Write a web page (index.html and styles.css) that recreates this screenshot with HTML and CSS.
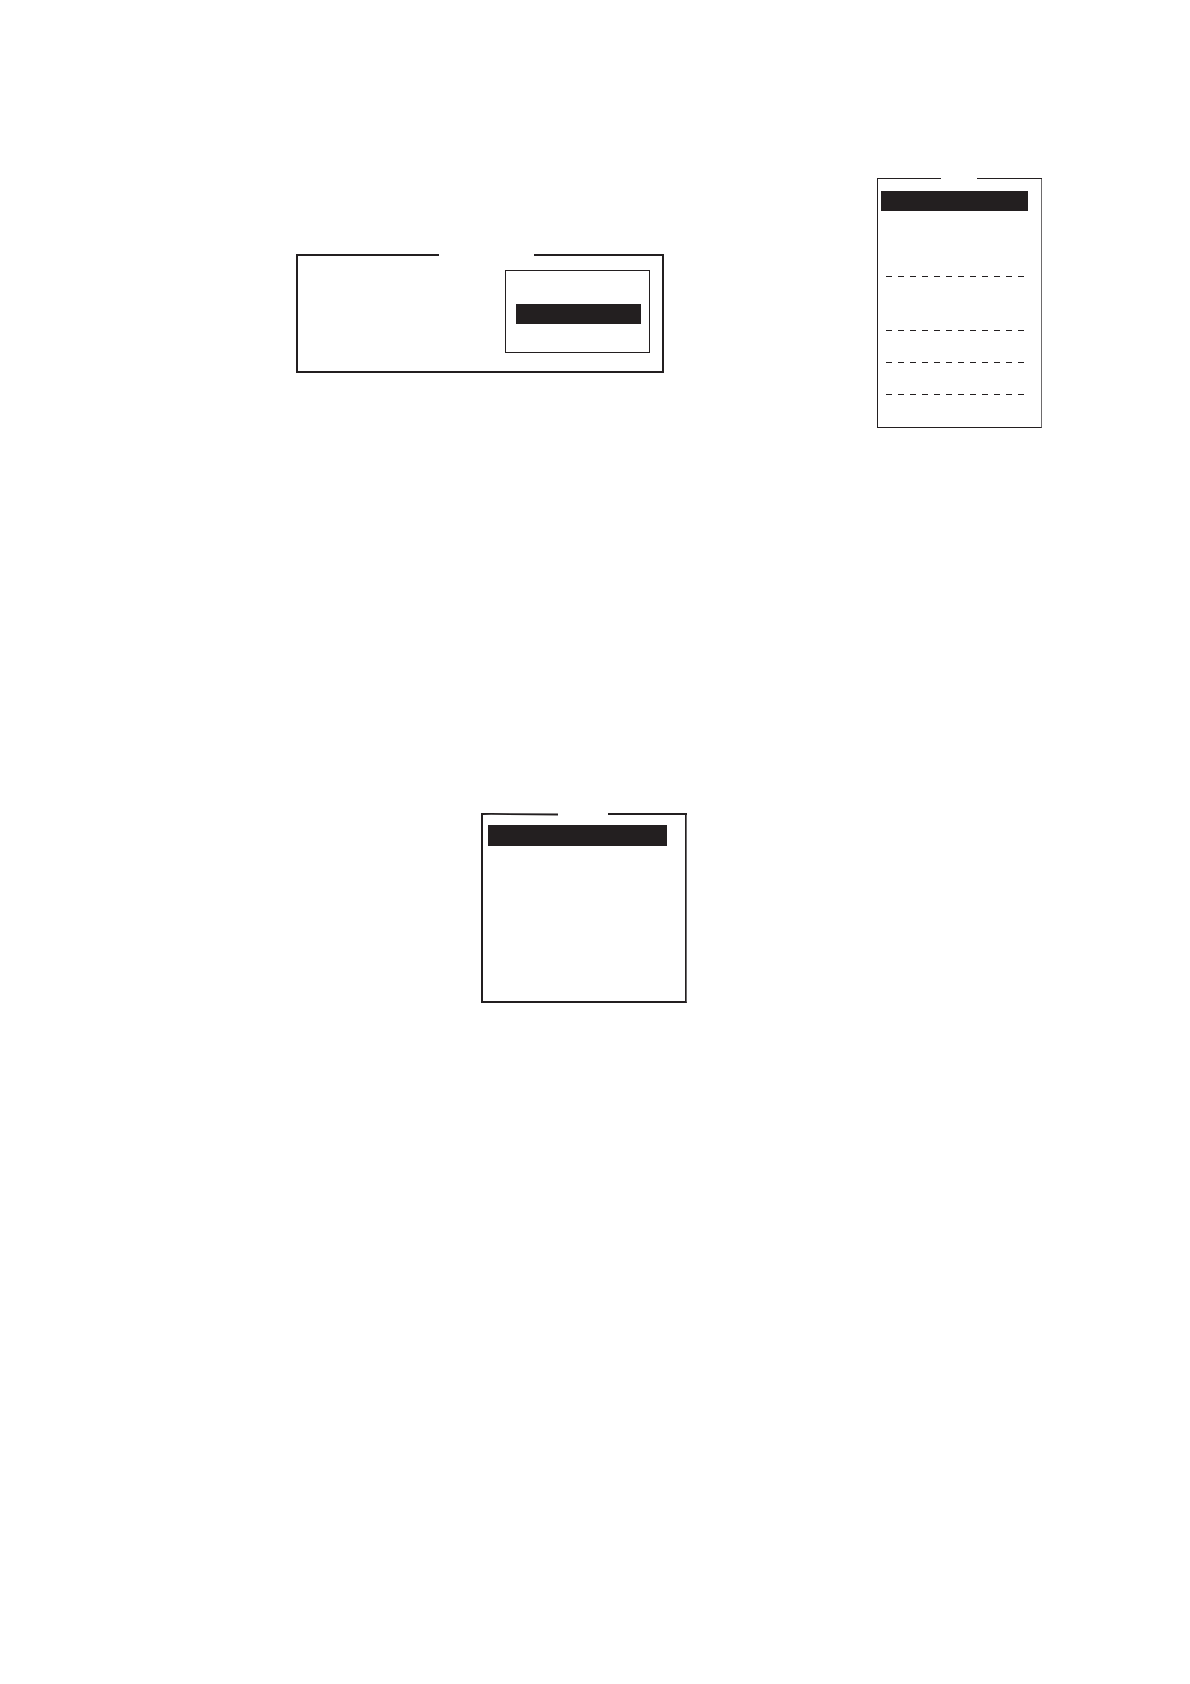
FILE: index.html
```html
<!DOCTYPE html>
<html lang="en">
<head>
<meta charset="utf-8">
<title>Menus</title>
<link rel="stylesheet" href="styles.css">
</head>
<body>
<main class="page">
  <div class="row row-top">
    <section class="panel panel-wide">
      <div class="edge"><span class="rule"></span><span class="rule"></span></div>
      <div class="body">
        <div class="popup"><div class="bar"></div></div>
      </div>
    </section>
    <section class="panel panel-list">
      <div class="edge"><span class="rule"></span><span class="rule"></span></div>
      <div class="body">
        <div class="bar"></div>
        <div class="dashes first"></div>
        <div class="dashes second"></div>
        <div class="dashes"></div>
        <div class="dashes"></div>
      </div>
    </section>
  </div>
  <div class="row row-bottom">
    <section class="panel panel-menu">
      <div class="edge">
        <svg class="slant" viewBox="0 0 77 3" preserveAspectRatio="none" aria-hidden="true"><path d="M0 0H10L77 .6V2.4L10 1.7L2 2H0Z"/></svg>
        <span class="rule"></span>
      </div>
      <div class="body"><div class="bar"></div></div>
    </section>
  </div>
</main>
</body>
</html>
```
FILE: styles.css
```css
:root {
  --ink: #231f20;
  --soft: #6d6b6c;
}

* {
  box-sizing: border-box;
}

body {
  margin: 0;
  background: #fff;
}

.page {
  min-height: 100vh;
  padding-top: 178px;
}

.row {
  display: grid;
  align-items: start;
}

.row-top {
  grid-template-columns: 296fr 368fr 213fr 165fr 148fr;
}

.row-bottom {
  grid-template-columns: 481fr 206fr 503fr;
  margin-top: 385px;
}

.edge {
  display: grid;
}

.rule {
  height: 2px;
  background: var(--ink);
}

.rule:last-child {
  grid-column: 3;
}

.body {
  border: 2px solid var(--ink);
  border-top: 0;
}

.bar {
  height: 20px;
  background: var(--ink);
}

.panel-wide {
  grid-column: 2;
  margin-top: 76px;
}

.panel-wide .edge {
  grid-template-columns: 143fr 95fr 130fr;
}

.panel-wide .body {
  display: grid;
  grid-template-columns: 207fr 145fr 12fr;
  padding: 14px 0 18px;
}

.popup {
  grid-column: 2;
  border: 1px solid var(--ink);
  padding: 33px 8px 28px 10px;
}

.panel-list {
  grid-column: 4;
}

.panel-list .edge {
  grid-template-columns: 64fr 36fr 65fr;
}

.panel-list .rule {
  height: 1px;
}

.panel-list .body {
  border-width: 0 1px 1px;
  border-right-color: var(--soft);
  padding: 12px 13px 32px 3px;
}

.dashes {
  height: 1px;
  margin: 31px 4px 0 5px;
  background: repeating-linear-gradient(90deg, var(--ink) 0 6px, transparent 6px 12px);
}

.dashes.first {
  margin-top: 65px;
}

.dashes.second {
  margin-top: 53px;
}

.panel-menu {
  grid-column: 2;
}

.panel-menu .edge {
  height: 2px;
  grid-template-columns: 77fr 50fr 79fr;
}

.slant {
  display: block;
  width: 100%;
  height: 3px;
  fill: var(--ink);
}

.panel-menu .body {
  border-right: 1px solid var(--soft);
  box-shadow: inset -1px 0 0 var(--ink);
  padding: 10px 19px 155px 5px;
}

.panel-menu .bar {
  height: 21px;
}
```
